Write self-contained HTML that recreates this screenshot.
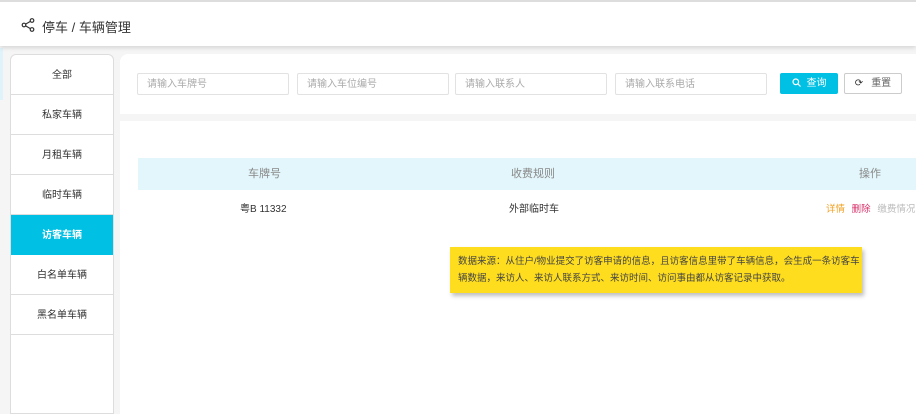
<!DOCTYPE html>
<html><head><meta charset="utf-8"><style>
*{box-sizing:border-box;margin:0;padding:0}
body{width:916px;height:410px;overflow:hidden;background:#f5f5f5;font-family:"Liberation Sans","Noto Sans CJK SC",sans-serif;position:relative;font-size:10px;color:#333}
.hdr{position:absolute;left:0;top:0;width:916px;height:46px;background:#fff;border-top:2px solid #ddd;box-shadow:0 2px 4px rgba(0,0,0,.12)}
.hdr .t{position:absolute;left:42px;top:15px;font-size:13px;color:#333}
.side{position:absolute;left:10px;top:54px;width:104px;height:360px;background:#fff;border:1px solid #ddd;border-radius:6px 6px 0 0;overflow:hidden}
.side div{height:40px;line-height:40px;text-align:center;border-bottom:1px solid #ddd;font-size:10px;color:#333;padding-top:1px}
.side .a{background:#00c0e4;color:#fff;font-weight:bold;border-color:#00c0e4}
.main{position:absolute;left:120px;top:54px;width:800px;height:360px;background:#fff;border-radius:8px 0 0 0}
.in{position:absolute;top:19px;height:22px;width:152px;border:1px solid #e2e2e2;border-radius:2px;color:#aaa;font-size:10px;line-height:21px;padding-left:9px}
.btn{position:absolute;top:19px;height:21px;width:58px;font-size:10px;line-height:21px;text-align:center}
.sep{position:absolute;left:0;top:60px;width:800px;height:7px;background:#f5f5f5}
.th{position:absolute;left:18px;top:104px;width:782px;height:32px;background:#e3f6fb;color:#888;font-size:11px;line-height:32px}
.note{position:absolute;left:450px;top:247px;width:412px;height:46px;background:#fedd1f;box-shadow:2px 3px 4px rgba(0,0,0,.25);font-size:9.5px;line-height:17px;padding:6px 0 6px 8px;color:#444}
</style></head><body>
<div style="position:absolute;left:0;top:48px;width:3px;height:52px;background:#dff3fb"></div>
<div class="hdr">
<svg style="position:absolute;left:21px;top:16px" width="14" height="14" viewBox="0 0 14 14" fill="none" stroke="#333" stroke-width="1.2"><circle cx="3" cy="7" r="1.8"/><circle cx="11" cy="2.5" r="1.8"/><circle cx="11" cy="11.5" r="1.8"/><path d="M4.6 6.1L9.4 3.4M4.6 7.9L9.4 10.6"/></svg>
<div class="t">停车 / 车辆管理</div></div>
<div class="side"><div>全部</div><div>私家车辆</div><div>月租车辆</div><div>临时车辆</div><div class="a">访客车辆</div><div>白名单车辆</div><div>黑名单车辆</div></div>
<div class="main">
<div class="in" style="left:17px">请输入车牌号</div>
<div class="in" style="left:177px">请输入车位编号</div>
<div class="in" style="left:335px">请输入联系人</div>
<div class="in" style="left:495px">请输入联系电话</div>
<div class="btn" style="left:660px;background:#00c0e4;color:#fff;border-radius:2px"><svg width="9" height="9" viewBox="0 0 9 9" fill="none" stroke="#fff" stroke-width="1.2" style="vertical-align:-1px;margin-right:6px"><circle cx="3.8" cy="3.8" r="2.8"/><path d="M6 6L8.5 8.5"/></svg>查询</div>
<div class="btn" style="left:724px;border:1px solid #ccc;color:#666;border-radius:2px;line-height:19px"><span style="margin-right:8px;color:#333">⟳</span>重置</div>
<div class="sep"></div>
<div class="th"><span style="position:absolute;left:110px">车牌号</span><span style="position:absolute;left:373px">收费规则</span><span style="position:absolute;left:721px">操作</span></div>
<div style="position:absolute;left:120px;top:146px;font-size:10px">粤B 11332</div>
<div style="position:absolute;left:389px;top:146px;font-size:10px">外部临时车</div>
<div style="position:absolute;left:706px;top:147px;font-size:9.5px"><span style="color:#f0a020">详情</span> <span style="color:#d8306a;margin-left:4px">删除</span> <span style="color:#bbb;margin-left:4px">缴费情况</span></div>
</div>
<div class="note">数据来源：从住户/物业提交了访客申请的信息，且访客信息里带了车辆信息，会生成一条访客车辆数据，来访人、来访人联系方式、来访时间、访问事由都从访客记录中获取。</div>
</body></html>
